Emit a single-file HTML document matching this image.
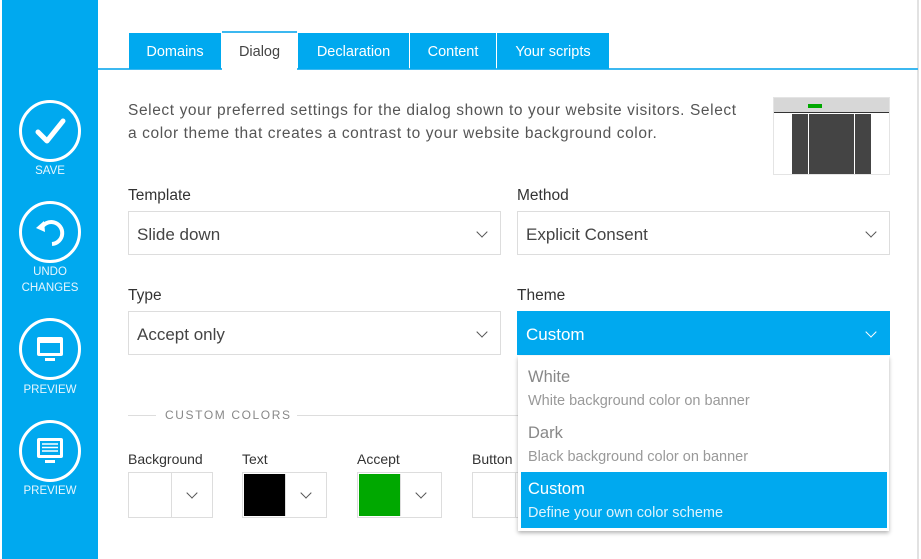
<!DOCTYPE html>
<html><head><style>
*{box-sizing:border-box;margin:0;padding:0}
body{width:921px;height:559px;overflow:hidden;background:#fff;font-family:"Liberation Sans","DejaVu Sans",sans-serif;position:relative;color:#333}
.side{position:absolute;left:2px;top:0;width:96px;height:559px;background:#00a9ef}
.btn{position:absolute;left:17px;width:62px;height:62px;border:3px solid #fff;border-radius:50%}
.lbl{position:absolute;left:0;width:96px;text-align:center;color:#e6f6fe;font-size:11.5px;line-height:16px}
.rb{position:absolute;left:917px;top:0;width:2px;height:559px;background:#e2e2e2}
.tabline{position:absolute;left:98px;top:68px;width:820px;height:2px;background:#3cb8f0}
.tab{position:absolute;top:33px;height:36px;background:#00a9ef;color:#fff;font-size:14.5px;line-height:38px;text-align:center}
.tab.act{top:31px;height:39px;background:#fff;color:#444;border-top:2px solid #3cb8f0;line-height:38px}
.p{position:absolute;left:128px;top:99px;font-size:15.5px;letter-spacing:0.6px;line-height:23px;color:#555;width:640px}
.lab{position:absolute;font-size:15.5px;color:#333}
.sel{position:absolute;height:44px;border:1px solid #ddd;font-size:17px;line-height:46px;padding-left:8px;color:#444}
.chev{position:absolute;right:14px;top:16px;width:8px;height:8px;border-right:1.5px solid #555;border-bottom:1.5px solid #555;transform:rotate(45deg)}
.cb{position:absolute;top:472px;width:85px;height:46px;border:1px solid #ddd}
.cb .sw{position:absolute;left:0;top:0;width:43px;height:44px;border-right:1px solid #ddd}
.cb .chev{left:59px;right:auto;top:16px}
.dd{position:absolute;left:518px;top:356px;width:371px;height:175px;background:#fff;box-shadow:0 2px 4px rgba(0,0,0,.3)}
.opt{position:absolute;left:10px;font-size:16.5px;color:#888}
.opt2{position:absolute;left:10px;font-size:14.5px;color:#999}
</style></head><body>
<div class="side">
 <div class="btn" style="top:100px"><svg width="56" height="56" viewBox="0 0 56 56"><path d="M16 29 L25 38 L41 18" fill="none" stroke="#fff" stroke-width="5" stroke-linecap="round" stroke-linejoin="round"/></svg></div>
 <div class="lbl" style="top:163px">SAVE</div>
 <div class="btn" style="top:201px"><svg width="56" height="56" viewBox="0 0 56 56"><path d="M19 25 A11 11 0 1 1 30 40" fill="none" stroke="#fff" stroke-width="4"/><path d="M14 24 L22 17 L23 28 Z" fill="#fff"/></svg></div>
 <div class="lbl" style="top:264px">UNDO</div>
 <div class="lbl" style="top:280px">CHANGES</div>
 <div class="btn" style="top:318px"><svg width="56" height="56" viewBox="0 0 56 56"><rect x="15" y="16" width="26" height="19" rx="2" fill="#fff"/><rect x="18" y="22" width="20" height="10" fill="#00a9ef"/><rect x="23" y="37" width="10" height="3" fill="#fff"/></svg></div>
 <div class="lbl" style="top:382px">PREVIEW</div>
 <div class="btn" style="top:420px"><svg width="56" height="56" viewBox="0 0 56 56"><rect x="15" y="15" width="26" height="20" rx="2" fill="#fff"/><rect x="18" y="18" width="20" height="14" fill="#00a9ef"/><path d="M20 21h16M20 24.5h16M20 28h16" stroke="#fff" stroke-width="1.6"/><rect x="23" y="37" width="10" height="3" fill="#fff"/></svg></div>
 <div class="lbl" style="top:483px">PREVIEW</div>
</div>
<div class="rb"></div>
<div class="tabline"></div>
<div class="tab" style="left:129px;width:92px">Domains</div>
<div class="tab act" style="left:222px;width:75px">Dialog</div>
<div class="tab" style="left:298px;width:111px">Declaration</div>
<div class="tab" style="left:410px;width:86px">Content</div>
<div class="tab" style="left:497px;width:112px">Your scripts</div>
<div class="p">Select your preferred settings for the dialog shown to your website visitors. Select<br>a color theme that creates a contrast to your website background color.</div>
<div style="position:absolute;left:773px;top:97px;width:117px;height:78px;border:1px solid #e4e4e4;background:#fff">
 <div style="position:absolute;left:0;top:0;width:115px;height:15px;background:#d7d7d7;border-bottom:1px solid #333"></div>
 <div style="position:absolute;left:34px;top:6px;width:14px;height:4px;background:#00a800"></div>
 <div style="position:absolute;left:18px;top:16px;width:16px;height:60px;background:#444"></div>
 <div style="position:absolute;left:35px;top:16px;width:45px;height:60px;background:#444"></div>
 <div style="position:absolute;left:81px;top:16px;width:16px;height:60px;background:#444"></div>
</div>
<div class="lab" style="left:128px;top:187px">Template</div>
<div class="sel" style="left:128px;top:211px;width:373px">Slide down<div class="chev"></div></div>
<div class="lab" style="left:517px;top:187px">Method</div>
<div class="sel" style="left:517px;top:211px;width:373px">Explicit Consent<div class="chev"></div></div>
<div class="lab" style="left:128px;top:287px">Type</div>
<div class="sel" style="left:128px;top:311px;width:373px">Accept only<div class="chev"></div></div>
<div class="lab" style="left:517px;top:287px">Theme</div>
<div class="sel" style="left:517px;top:311px;width:373px;background:#00a9ef;border-color:#00a9ef;color:#fff">Custom<div class="chev" style="border-color:#fff"></div></div>
<div style="position:absolute;left:128px;top:415px;width:28px;height:1px;background:#ddd"></div>
<div style="position:absolute;left:165px;top:408px;font-size:12px;letter-spacing:1.6px;color:#888">CUSTOM COLORS</div>
<div style="position:absolute;left:297px;top:415px;width:222px;height:1px;background:#ddd"></div>
<div class="lab" style="left:128px;top:451px;font-size:14px">Background</div>
<div class="lab" style="left:242px;top:451px;font-size:14px">Text</div>
<div class="lab" style="left:357px;top:451px;font-size:14px">Accept</div>
<div class="lab" style="left:472px;top:451px;font-size:14px">Button</div>
<div class="cb" style="left:128px"><div class="sw"></div><div class="chev"></div></div>
<div class="cb" style="left:242px"><div class="sw" style="background:#000;left:1px;top:1px;height:42px;width:42px"></div><div class="chev"></div></div>
<div class="cb" style="left:357px"><div class="sw" style="background:#00a800;left:1px;top:1px;height:42px;width:42px"></div><div class="chev"></div></div>
<div class="cb" style="left:472px"><div class="sw"></div></div>
<div class="dd">
 <div class="opt" style="top:12px">White</div>
 <div class="opt2" style="top:37px">White background color on banner</div>
 <div class="opt" style="top:68px">Dark</div>
 <div class="opt2" style="top:93px">Black background color on banner</div>
 <div style="position:absolute;left:3px;top:116px;width:366px;height:56px;background:#00a9ef">
  <div class="opt" style="left:7px;top:8px;color:#fff">Custom</div>
  <div class="opt2" style="left:7px;top:33px;color:#e0f4fd">Define your own color scheme</div>
 </div>
</div>
</body></html>
